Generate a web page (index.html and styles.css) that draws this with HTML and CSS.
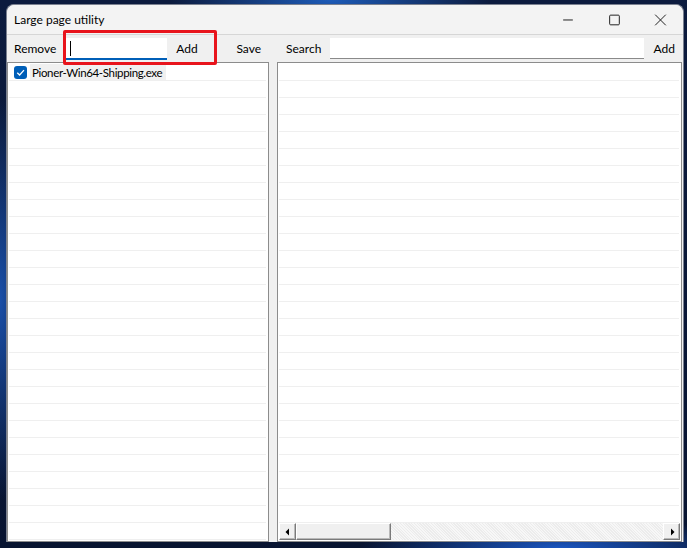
FILE: index.html
```html
<!DOCTYPE html><html><head><meta charset="utf-8">
<meta name="viewport" content="initial-scale=1.0, width=device-width">
<title>Large page utility</title>
<link rel="stylesheet" href="styles.css">
</head>
<body>
<div class="window">
  <div class="titlebar">
    <span class="title">Large page utility</span>
    <div class="caption">
      <svg class="cap" viewBox="0 0 46 30"><path d="M18 15.5 H28" /></svg>
      <svg class="cap" viewBox="0 0 46 30"><rect x="18.5" y="10.5" width="10" height="10" rx="1" /></svg>
      <svg class="cap" viewBox="0 0 46 30"><path d="M18 10 L29 21 M29 10 L18 21" /></svg>
    </div>
  </div>

  <div class="content">
    <div class="panel left">
      <div class="toolbar">
        <button type="button" class="tb">Remove</button>
        <div class="edit focus"><span class="caret"></span></div>
        <button type="button" class="tb add">Add</button>
        <span class="spacer"></span>
        <button type="button" class="tb save">Save</button>
      </div>
      <div class="list" id="procs">
        <div class="row">
          <span class="check"><svg viewBox="0 0 12 12"><path d="M3 6.2 L5.2 8.3 L9.2 3.8" /></svg></span>
          <span class="item sel">Pioner-Win64-Shipping.exe</span>
        </div>
      </div>
    </div>

    <div class="splitter"></div>

    <div class="panel right">
      <div class="toolbar">
        <button type="button" class="tb">Search</button>
        <div class="edit wide"></div>
        <button type="button" class="tb">Add</button>
      </div>
      <div class="list" id="found">
        <div class="hscroll">
          <span class="sbtn"><svg viewBox="0 0 8 8"><path d="M5 0.5 V7.5 L1.5 4 Z" /></svg></span>
          <span class="thumb"></span>
          <span class="track"></span>
          <span class="sbtn"><svg viewBox="0 0 8 8"><path d="M3 0.5 V7.5 L6.5 4 Z" /></svg></span>
        </div>
      </div>
    </div>
  </div>

  <div class="mark"></div>
</div>

<script>
  // fill both lists with empty grid rows
  function pad(id, n) {
    var list = document.getElementById(id);
    var bar = list.querySelector(".hscroll");
    for (var i = 0; i < n; i++) {
      var r = document.createElement("div");
      r.className = "row";
      list.insertBefore(r, bar);
    }
  }
  pad("procs", 27);
  pad("found", 27);
</script>
</body>
</html>
```

FILE: styles.css
```css
html,body,div,button,span{margin:0;padding:0;}
*{box-sizing:border-box;}
body{
  width:687px;
  height:548px;
  overflow:hidden;
  font-family:Lato,"Noto Sans",sans-serif;
  font-size:12px;
  color:#000;
  background:#0a1530;
  background:
    radial-gradient(ellipse 160px 40px at 330px 0px, #1d5bb8 0%, rgba(29,91,184,0) 100%),
    radial-gradient(ellipse 200px 30px at 560px 548px, #1b56c0 0%, rgba(27,86,192,0) 100%),
    radial-gradient(ellipse 40px 200px at 0px 300px, #1a4fa8 0%, rgba(26,79,168,0) 100%),
    linear-gradient(#0c1b3e, #081431);
  padding:4px 0 0 6px;
}
.window{
  position:relative;
  width:678px;
  height:538px;
  background:#f0f0f0;
  border:1px solid #7b8190;
  border-bottom:none;
  border-radius:8px 8px 0 0;
  display:flex;
  flex-direction:column;
}
.titlebar{
  height:30px;
  display:flex;
  align-items:center;
  border-bottom:1px solid #d6d6d6;
  border-radius:8px 8px 0 0;
  background:#f3f3f3;
}
.title{padding-left:7px;flex:1;margin-top:-1px;}
.caption{display:flex;height:29px;}
.cap{
  width:46px;height:29px;
  fill:none;stroke:#1b1b1b;stroke-width:1;
}

.content{flex:1;display:flex;min-height:0;}
.panel{display:flex;flex-direction:column;}
.left{width:262px;}
.right{flex:1;margin-right:1px;}
.splitter{width:8px;}

.toolbar{
  height:28px;
  display:flex;
  align-items:center;
  border-bottom:1px solid #8c8c8c;
}
.tb{
  font:inherit;
  background:transparent;
  border:none;
  padding:0 7px;
  height:26px;
  color:#000;
}
.left .tb:first-child{padding-left:7px;padding-right:6px;}
.tb.add{padding-left:9px;}
.tb.save{padding-right:8px;}
.spacer{flex:1;}
.edit{
  height:22px;
  background:#fff;
  border-bottom:1px solid #8a8a8a;
  position:relative;
}
.edit.focus{width:101px;border-bottom:2px solid #005fb8;margin-left:4px;}
.edit.wide{flex:1;margin-left:1px;margin-right:3px;height:21px;}
.caret{
  position:absolute;left:4px;top:3px;
  width:1px;height:15px;background:#000;
}
.right .tb:first-child{padding-left:9px;padding-right:8px;}

.list{
  flex:1;
  position:relative;
  background:#fff;
  padding-top:1px;
  border-left:1px solid #8c8c8c;
  border-right:1px solid #8c8c8c;
  border-bottom:1px solid #8c8c8c;
  overflow:hidden;
}
.row{
  height:17px;
  border-bottom:1px solid #efefef;
  display:flex;
  align-items:center;
  margin:0 2px 0 1px;
}
.check{
  width:13px;height:13px;
  margin-left:5px;margin-top:1px;
  border-radius:3px;
  background:#005fb8;
  display:flex;
}
.check svg{width:13px;height:13px;fill:none;stroke:#fff;stroke-width:1.2;}
.item{
  margin-left:3px;padding:1px 4px 0 2px;line-height:15px;
  font-size:11.5px;letter-spacing:-0.35px;
}
.sel{background:#f0f0f0;}

.hscroll{
  position:absolute;
  left:1px;right:1px;bottom:1px;
  height:17px;
  display:flex;
  background:#f4f4f4;
  background-image:repeating-linear-gradient(45deg,#f7f7f7 0 1px,#ececec 1px 2px);
}
.sbtn,.thumb{
  height:17px;
  background:#f0f0f0;
  border:1px solid;
  border-color:#fff #7a7a7a #7a7a7a #fff;
  box-shadow:inset -1px -1px 0 #b8b8b8;
}
.sbtn{width:17px;display:flex;align-items:center;justify-content:center;}
.sbtn svg{width:8px;height:8px;fill:#000;}
.thumb{width:95px;}
.track{flex:1;}

.mark{
  position:absolute;
  left:56px;top:25px;
  width:154px;height:35px;
  border:3px solid #e8141c;
  border-radius:2px;
}
```
